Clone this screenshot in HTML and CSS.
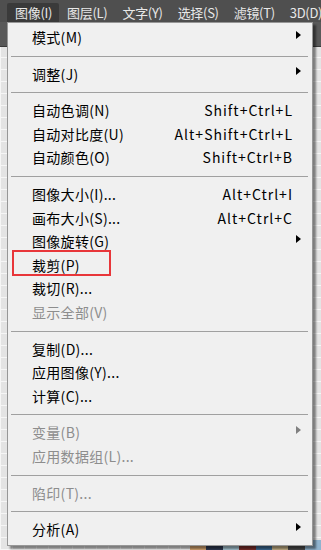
FILE: index.html
```html
<!DOCTYPE html>
<html lang="zh-CN">
<head>
  <meta charset="UTF-8">
  <meta name="viewport" content="width=device-width, initial-scale=1.0">
  <title>图像菜单</title>
  <link rel="stylesheet" href="styles.css">
</head>
<body>

<!-- Top menu bar -->
<div class="menubar">
  <span class="menubar-item active">图像(I)</span>
  <span class="menubar-item">图层(L)</span>
  <span class="menubar-item">文字(Y)</span>
  <span class="menubar-item">选择(S)</span>
  <span class="menubar-item">滤镜(T)</span>
  <span class="menubar-item">3D(D)</span>
</div>

<!-- Workspace behind the menu -->
<div class="workspace">
  <div class="options-bar"></div>
  <div class="canvas">
    <div class="swatches">
      <span class="sw" style="background:#d9a873"></span>
      <span class="sw" style="background:#2f3a52"></span>
      <span class="sw" style="background:#a9c9d6"></span>
      <span class="sw" style="background:#7a2e2a"></span>
      <span class="sw" style="background:#3d6b94"></span>
      <span class="sw" style="background:#c8b58a"></span>
      <span class="sw" style="background:#4b4b4b"></span>
      <span class="sw" style="background:#8fb3cf"></span>
    </div>
  </div>
</div>

<!-- Dropdown menu -->
<div class="menu">
  <div class="item sub"><span class="label">模式(M)</span><span class="key"></span><span class="arrow"></span></div>
  <div class="sep"></div>
  <div class="item sub"><span class="label">调整(J)</span><span class="key"></span><span class="arrow"></span></div>
  <div class="sep"></div>
  <div class="item"><span class="label">自动色调(N)</span><span class="key">Shift+Ctrl+L</span></div>
  <div class="item"><span class="label">自动对比度(U)</span><span class="key">Alt+Shift+Ctrl+L</span></div>
  <div class="item"><span class="label">自动颜色(O)</span><span class="key">Shift+Ctrl+B</span></div>
  <div class="sep"></div>
  <div class="item"><span class="label">图像大小(I)...</span><span class="key">Alt+Ctrl+I</span></div>
  <div class="item"><span class="label">画布大小(S)...</span><span class="key">Alt+Ctrl+C</span></div>
  <div class="item sub"><span class="label">图像旋转(G)</span><span class="key"></span><span class="arrow"></span></div>
  <div class="item"><span class="label">裁剪(P)</span><span class="key"></span></div>
  <div class="item"><span class="label">裁切(R)...</span><span class="key"></span></div>
  <div class="item disabled"><span class="label">显示全部(V)</span><span class="key"></span></div>
  <div class="sep"></div>
  <div class="item"><span class="label">复制(D)...</span><span class="key"></span></div>
  <div class="item"><span class="label">应用图像(Y)...</span><span class="key"></span></div>
  <div class="item"><span class="label">计算(C)...</span><span class="key"></span></div>
  <div class="sep"></div>
  <div class="item sub disabled"><span class="label">变量(B)</span><span class="key"></span><span class="arrow"></span></div>
  <div class="item disabled"><span class="label">应用数据组(L)...</span><span class="key"></span></div>
  <div class="sep"></div>
  <div class="item disabled"><span class="label">陷印(T)...</span><span class="key"></span></div>
  <div class="sep"></div>
  <div class="item sub"><span class="label">分析(A)</span><span class="key"></span><span class="arrow"></span></div>

  <!-- red highlight box over 裁剪 -->
  <div class="highlight"></div>
</div>

</body>
</html>
```

FILE: styles.css
```css
/* General styles */
body {
  margin: 0;
  width: 321px;
  height: 550px;
  overflow: hidden;
  position: relative;
  background: #535353;
  font-family: "Noto Sans CJK SC", "Microsoft YaHei", sans-serif;
}

/* Menu bar */
.menubar {
  display: flex;
  height: 22px;
  padding-left: 7px;
  background: #4f4f4f;
  color: #e8e8e8;
  font-size: 13px;
  letter-spacing: -0.3px;
}

.menubar-item {
  display: flex;
  align-items: center;
  height: 19px;
  margin-top: 3px;
  padding: 0 7px 0 8px;
  line-height: 19px;
  white-space: nowrap;
}

.menubar-item.active {
  background: #3a3a3a;
  border-radius: 2px 2px 0 0;
}

/* Workspace */
.workspace {
  height: 528px;
  display: flex;
  flex-direction: column;
}

.options-bar {
  height: 24px;
  background: #595959;
  border-bottom: 1px solid #3a3a3a;
}

.canvas {
  flex: 1;
  display: flex;
  flex-direction: column;
  justify-content: flex-end;
  background-color: #e4e4e4;
  background-image:
    repeating-linear-gradient(0deg, #f6f6f6 0 1px, transparent 1px 12px),
    repeating-linear-gradient(90deg, #f6f6f6 0 1px, transparent 1px 12px);
}

.swatches {
  display: flex;
  height: 10px;
  padding-left: 190px;
}

.sw {
  width: 17px;
}

/* Dropdown menu */
.menu {
  position: absolute;
  left: 7px;
  top: 22px;
  width: 304px;
  padding: 3px 0 3px;
  background: #f0f0f0;
  border: 1px solid #979797;
  box-shadow: 3px 3px 2px rgba(0, 0, 0, 0.45);
  font-size: 14px;
  color: #000;
}

.item {
  display: grid;
  grid-template-columns: 1fr auto 20px;
  align-items: center;
  height: 23.6px;
  line-height: 23.6px;
  padding-left: 24px;
  white-space: nowrap;
}

.label {
  letter-spacing: 0.3px;
}

.item.disabled {
  color: #8d8d8d;
}

.key {
  text-align: right;
  letter-spacing: 1px;
  margin-right: -1px;
}

.arrow {
  width: 0;
  height: 0;
  margin-left: 4px;
  margin-bottom: 6px;
  border-left: 5px solid #000;
  border-top: 4px solid transparent;
  border-bottom: 4px solid transparent;
}

.item.disabled .arrow {
  border-left-color: #808080;
}

/* Separator */
.sep {
  height: 13px;
  box-sizing: border-box;
  padding-top: 6px;
  margin: 0 4px 0 3px;
}

.sep::before {
  content: "";
  display: block;
  height: 1px;
  background: #a0a0a0;
}

/* Red box around 裁剪 */
.highlight {
  position: absolute;
  left: 4px;
  top: 227px;
  width: 95px;
  height: 22px;
  border: 2px solid #e8363a;
}
```
